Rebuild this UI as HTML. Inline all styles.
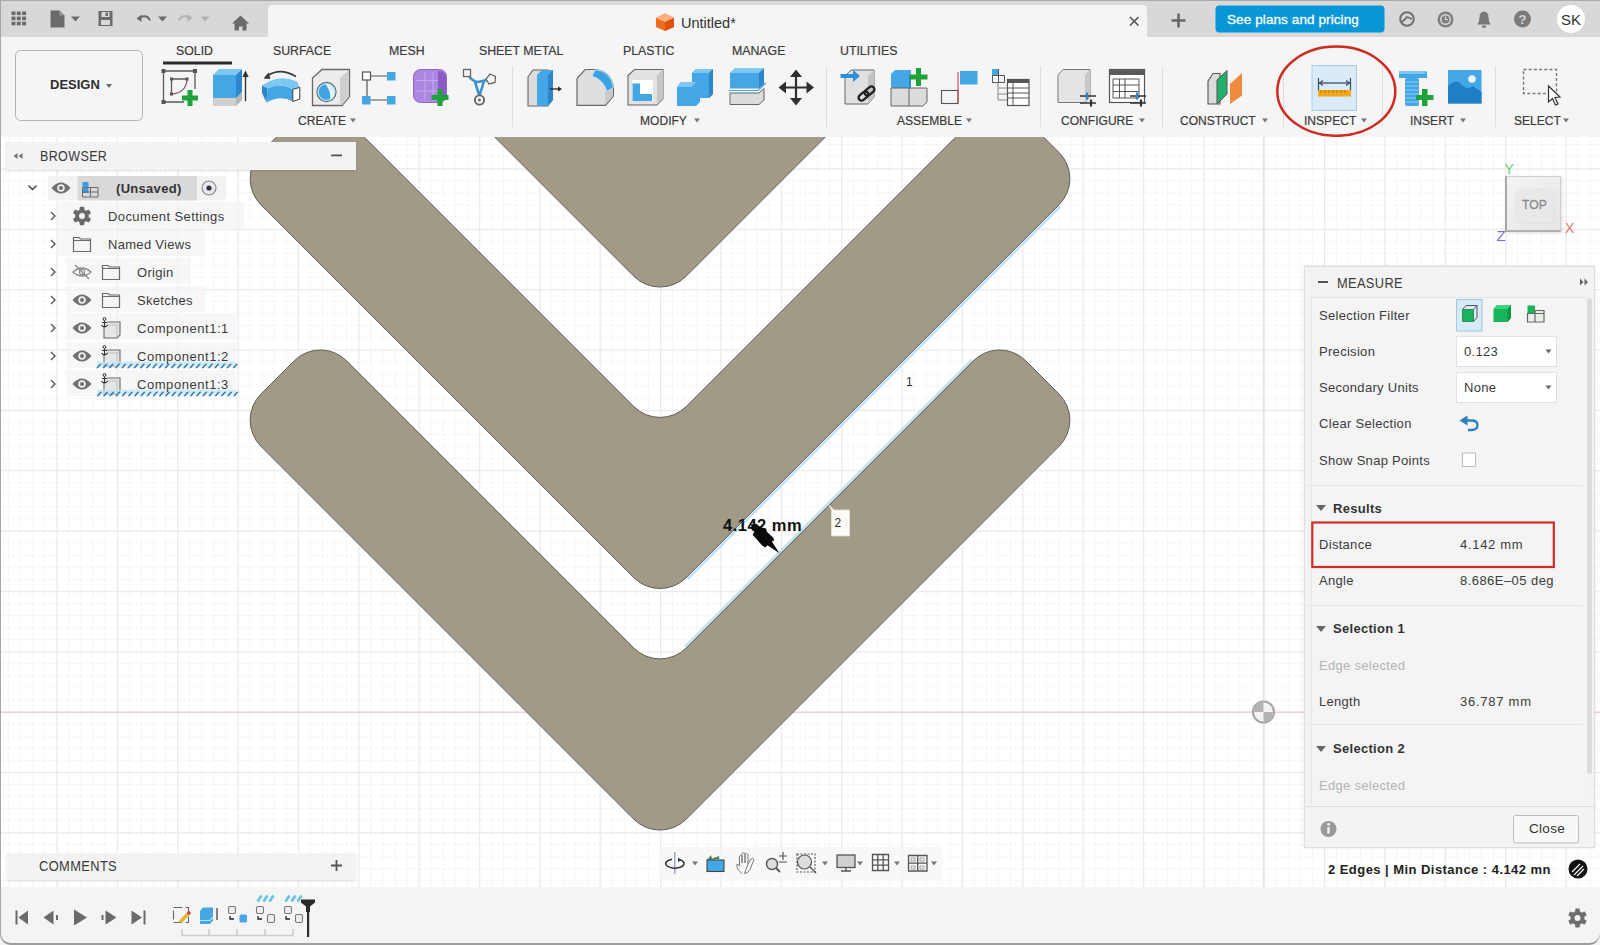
<!DOCTYPE html>
<html><head><meta charset="utf-8">
<style>
*{margin:0;padding:0;box-sizing:border-box}
html,body{width:1600px;height:945px;overflow:hidden;background:#f5f5f5;font-family:"Liberation Sans",sans-serif;color:#3c3c3c}
.a{position:absolute}
#vp{position:absolute;left:0;top:137px;width:1600px;height:750px;background:#fff;overflow:hidden}
#title{position:absolute;left:0;top:0;width:1600px;height:37px;background:#d8d8d8;border-top:1px solid #a9a9a9}
#tool{position:absolute;left:0;top:37px;width:1600px;height:100px;background:#f5f5f5}
.tab{position:absolute;top:6.8px;-webkit-text-stroke:0.2px #3a3a3a;font-size:12.5px;transform:scaleX(0.985);transform-origin:0 0;color:#3a3a3a;white-space:nowrap}
.grp{position:absolute;top:77.2px;-webkit-text-stroke:0.2px #3a3a3a;font-size:12.5px;transform:scaleX(0.965);transform-origin:0 0;color:#3a3a3a;white-space:nowrap}
.dd{display:inline-block;width:0;height:0;border-left:3px solid transparent;border-right:3px solid transparent;border-top:4px solid #777;margin-left:6px;vertical-align:2px}
.sep{position:absolute;top:66px;width:1px;height:62px;background:#dcdcdc}
.t{position:absolute;font-size:13px;color:#3c3c3c;white-space:nowrap;letter-spacing:0.3px}
svg{display:block}
</style></head><body>
<!-- VIEWPORT -->
<div id="vp">
<svg width="1600" height="750" viewBox="0 137 1600 750">
<defs>
<pattern id="gmin" width="12.072" height="12.072" patternUnits="userSpaceOnUse" patternTransform="translate(56.4,47.6)">
<rect x="0" y="0" width="1" height="12.072" fill="#f6f6f6"/><rect x="0" y="0" width="12.072" height="1" fill="#f6f6f6"/>
</pattern>
<pattern id="gmaj" width="60.36" height="60.36" patternUnits="userSpaceOnUse" patternTransform="translate(56.4,47.6)">
<rect x="0" y="0" width="1.3" height="60.36" fill="#ebebeb"/><rect x="0" y="0" width="60.36" height="1.3" fill="#ebebeb"/>
</pattern>
</defs>
<rect x="0" y="137" width="1600" height="750" fill="url(#gmin)"/>
<rect x="0" y="137" width="1600" height="750" fill="url(#gmaj)"/>
<rect x="0" y="711.6" width="1600" height="1.4" fill="#f0d2d2"/>
<rect x="1262.8" y="137" width="1.5" height="750" fill="#dfe7e5"/>
<g fill="#a19a86" stroke="#5f5d57" stroke-width="1">
<path d="M260.98,-148.98 L294.22,-182.22 A37,37 0 0 1 346.54,-182.22 L633.84,105.08 A37,37 0 0 0 686.16,105.08 L973.46,-182.22 A37,37 0 0 1 1025.78,-182.22 L1059.02,-148.98 A37,37 0 0 1 1059.02,-96.66 L686.16,276.20 A37,37 0 0 1 633.84,276.20 L260.98,-96.66 A37,37 0 0 1 260.98,-148.98 Z"/>
<path d="M260.98,152.52 L294.22,119.28 A37,37 0 0 1 346.54,119.28 L633.84,406.58 A37,37 0 0 0 686.16,406.58 L973.46,119.28 A37,37 0 0 1 1025.78,119.28 L1059.02,152.52 A37,37 0 0 1 1059.02,204.84 L686.16,577.70 A37,37 0 0 1 633.84,577.70 L260.98,204.84 A37,37 0 0 1 260.98,152.52 Z"/>
<path d="M260.98,394.02 L294.22,360.78 A37,37 0 0 1 346.54,360.78 L633.84,648.08 A37,37 0 0 0 686.16,648.08 L973.46,360.78 A37,37 0 0 1 1025.78,360.78 L1059.02,394.02 A37,37 0 0 1 1059.02,446.34 L686.16,819.20 A37,37 0 0 1 633.84,819.20 L260.98,446.34 A37,37 0 0 1 260.98,394.02 Z"/>
</g>
<!-- edge highlights -->
<path d="M687.6,579.1 L1060.2,206.5" stroke="#b3dbec" stroke-width="1.8" fill="none"/>
<path d="M686.16,577.70 L1059.02,204.84" stroke="#6a7378" stroke-width="1" fill="none"/>
<path d="M684.8,646.7 L972.1,359.4" stroke="#b3dbec" stroke-width="1.8" fill="none"/>
<path d="M686.16,648.08 L973.46,360.78" stroke="#6a7378" stroke-width="1" fill="none"/>
<!-- origin marker -->
<circle cx="1263.5" cy="712" r="10.5" fill="#f4f4f4" stroke="#a9a9a9" stroke-width="2.2"/>
<path d="M1263.5,702.5 A9.5,9.5 0 0 0 1254,712 H1263.5 Z M1263.5,721.5 A9.5,9.5 0 0 0 1273,712 H1263.5 Z" fill="#b3b3b3"/>
<!-- labels -->
<text x="906" y="385.5" font-family="Liberation Sans" font-size="12" fill="#333">1</text>
<path d="M829,505 L834,510 H849.5 V536 H831.5 V510 Z" fill="#fbfaf6" stroke="#e6e1d8" stroke-width="0.8"/>
<text x="834.5" y="526.5" font-family="Liberation Sans" font-size="12" fill="#333">2</text>
<text x="723" y="530.5" font-family="Liberation Sans" font-weight="bold" font-size="16.5" letter-spacing="0.5" fill="#111">4.142 mm</text>
<path d="M751.2,524.6 L756.1,523.8 L760.9,527.2 L766.2,528.5 L766.8,531.7 L773.3,537.8 L774.3,540.2 L771.9,541.4 L779.4,553.3 L767.5,545.3 L765.3,547.6 L762.2,545.4 L752.6,534.8 L754.4,531.7 L751.4,529.4 Z" fill="#0a0a0a"/>
</svg>
</div>

<!-- TITLE BAR -->
<div id="title">
<svg width="1600" height="37" viewBox="0 0 1600 37" style="position:absolute;left:0;top:-1px">
<!-- grid 9 -->
<g fill="#6a6a6a">
<rect x="11.5" y="11.5" width="4" height="3.6"/><rect x="16.8" y="11.5" width="4" height="3.6"/><rect x="22.1" y="11.5" width="4" height="3.6"/>
<rect x="11.5" y="16.6" width="4" height="3.6"/><rect x="16.8" y="16.6" width="4" height="3.6"/><rect x="22.1" y="16.6" width="4" height="3.6"/>
<rect x="11.5" y="21.7" width="4" height="3.6"/><rect x="16.8" y="21.7" width="4" height="3.6"/><rect x="22.1" y="21.7" width="4" height="3.6"/>
</g>
<!-- file -->
<path d="M50.5,10.5 H59.5 L64.5,15.5 V27.5 H50.5 Z" fill="#6a6a6a"/>
<path d="M59.5,10.5 V15.5 H64.5" fill="#9a9a9a"/>
<path d="M71,16.5 H80 L75.5,21.5 Z" fill="#6a6a6a"/>
<!-- save -->
<path d="M98.5,11 H112.5 V26 H98.5 Z" fill="#6a6a6a"/>
<rect x="101.5" y="12" width="8" height="5" fill="#d8d8d8"/><rect x="105.5" y="12.5" width="2.5" height="3.5" fill="#6a6a6a"/>
<rect x="101" y="20" width="9" height="5" fill="#d8d8d8"/>
<!-- undo -->
<path d="M139,18 C143,15 148,15.5 150,20.5" stroke="#6a6a6a" stroke-width="2" fill="none"/>
<path d="M136.5,18.5 L141.5,14.5 L141.5,22 Z" fill="#6a6a6a"/>
<path d="M158,16.5 H167 L162.5,21.5 Z" fill="#6a6a6a"/>
<!-- redo -->
<path d="M190,18 C186,15 181,15.5 179,20.5" stroke="#b2b2b2" stroke-width="2" fill="none"/>
<path d="M192.5,17.5 L187.5,14.5 L187.5,22 Z" fill="#b2b2b2"/>
<path d="M200.5,16.5 H209.5 L205,21.5 Z" fill="#b2b2b2"/>
<!-- home -->
<path d="M240.5,15.5 L249,23.5 H246.5 V30.5 H242.5 V26.5 H239 V30.5 H234.5 V23.5 H232 Z" fill="#6a6a6a"/>
<!-- active tab -->
<path d="M268,37 V10 Q268,5 273,5 H1142 Q1147,5 1147,10 V37 Z" fill="#f5f5f5"/>
<!-- cube icon -->
<path d="M665,13.5 L674,18 V27 L665,31 L656,27 V18 Z" fill="#f06a1e"/>
<path d="M665,13.5 L674,18 L665,22 L656,18 Z" fill="#fbb07e"/>
<path d="M665,22 L674,18 V27 L665,31 Z" fill="#e0520c"/>
<path d="M1130,17 L1138.5,25.5 M1138.5,17 L1130,25.5" stroke="#555" stroke-width="1.6"/>
<!-- plus tab -->
<path d="M1171.5,20.5 H1185.5 M1178.5,13.5 V27.5" stroke="#666" stroke-width="2.6"/>
<!-- blue button -->
<rect x="1215.5" y="5.5" width="169" height="27" rx="4" fill="#0796d8"/>
<!-- right icons -->
<g fill="none" stroke="#707070" stroke-width="2">
<circle cx="1407" cy="19" r="6.8"/>
</g>
<path d="M1402,22 L1407,17 L1412,19" stroke="#707070" stroke-width="1.8" fill="none"/>
<circle cx="1445.5" cy="19.5" r="8" fill="#808080"/>
<circle cx="1445.5" cy="19.5" r="5.5" fill="#d8d8d8"/>
<circle cx="1445.5" cy="19.5" r="4" fill="#808080"/>
<path d="M1445.5,16.5 V19.5 H1448" stroke="#d8d8d8" stroke-width="1.2" fill="none"/>
<path d="M1477.5,24.5 Q1479.5,22 1479.5,17 Q1479.5,12 1484,11.5 Q1488.5,12 1488.5,17 Q1488.5,22 1490.5,24.5 Z" fill="#777"/>
<rect x="1482" y="25.5" width="4" height="2.2" rx="1" fill="#777"/>
<circle cx="1522.5" cy="19" r="8.5" fill="#7a7a7a"/>
<text x="1522.5" y="24" font-family="Liberation Sans" font-weight="bold" font-size="13" fill="#d8d8d8" text-anchor="middle">?</text>
<circle cx="1571" cy="19" r="14" fill="#ffffff"/>
<text x="1571" y="24.5" font-family="Liberation Sans" font-size="15" fill="#333" text-anchor="middle">SK</text>
</svg>
<div class="a" style="left:681px;top:14px;font-size:14.5px;color:#333">Untitled*</div>
<div class="a" style="left:1227px;top:11px;font-size:13.5px;color:#fff;letter-spacing:0.1px;-webkit-text-stroke:0.3px #fff">See plans and pricing</div>
</div>

<!-- TOOLBAR -->
<div id="tool">
<svg width="1600" height="100" viewBox="0 37 1600 100" style="position:absolute;left:0;top:0">
<!-- DESIGN box -->
<rect x="15.5" y="50.5" width="127" height="70" rx="5" fill="#f5f5f5" stroke="#b4b4b4" stroke-width="1"/>
<path d="M106,84 H112 L109,88 Z" fill="#6a6a6a"/>
<!-- SOLID underline -->
<rect x="163" y="61.5" width="69" height="3" fill="#2c2c2c"/>
<!-- separators -->
<g fill="#dddddd">
<rect x="512" y="66" width="1" height="61"/><rect x="826" y="66" width="1" height="61"/>
<rect x="1040" y="66" width="1" height="61"/><rect x="1162" y="66" width="1" height="61"/>
<rect x="1283" y="66" width="1" height="61"/><rect x="1382" y="66" width="1" height="61"/>
<rect x="1495" y="66" width="1" height="61"/>
</g>
<!-- dropdown arrows -->
<g fill="#777">
<path d="M350,118.5 H356 L353,122.5 Z"/><path d="M694,118.5 H700 L697,122.5 Z"/>
<path d="M966,118.5 H972 L969,122.5 Z"/><path d="M1139,118.5 H1145 L1142,122.5 Z"/>
<path d="M1262,118.5 H1268 L1265,122.5 Z"/><path d="M1361,118.5 H1367 L1364,122.5 Z"/>
<path d="M1460,118.5 H1466 L1463,122.5 Z"/><path d="M1563,118.5 H1569 L1566,122.5 Z"/>
</g>
<!-- 1 sketch -->
<g stroke="#5a5a5a" stroke-width="1.3" fill="none">
<path d="M163.5,71 H195 M163.5,71 V102 M163.5,102 H184 M195,71 V89"/>
<path d="M171.5,79 H187 M171.5,79 V94"/>
</g>
<path d="M187,79.5 Q186,93 171.5,94" stroke="#8a5a78" stroke-width="1.3" fill="none"/>
<g fill="#555"><rect x="161.5" y="69" width="4" height="4"/><rect x="193" y="69" width="4" height="4"/><rect x="161.5" y="100" width="4" height="4"/>
<rect x="170" y="77.5" width="3" height="3"/><rect x="185.5" y="77.5" width="3" height="3"/><rect x="170" y="92.5" width="3" height="3"/></g>
<path d="M187.5,90 H192.5 V95.5 H198 V100.5 H192.5 V106 H187.5 V100.5 H182 V95.5 H187.5 Z" fill="#1ea23a"/>
<!-- 2 extrude -->
<path d="M213,98 H236 V106 H213 Z" fill="#cfcfcf"/><path d="M236,98 L242,92 V100 L236,106 Z" fill="#b5b5b5"/>
<path d="M213,75 H236 V98 H213 Z" fill="#44a6e4"/>
<path d="M213,75 L219,69 H242 L236,75 Z" fill="#7cc8f3"/>
<path d="M236,75 L242,69 V92 L236,98 Z" fill="#2b87c9"/>
<path d="M245.5,101 V75" stroke="#333" stroke-width="1.4"/><path d="M242.3,77 L245.5,70.5 L248.7,77 Z" fill="#333"/>
<!-- 3 revolve -->
<path d="M296,76.5 Q280,67 267,76" stroke="#3a3a3a" stroke-width="1.5" fill="none"/><path d="M263.5,78.5 L268.5,72.5 L270.5,79 Z" fill="#3a3a3a"/>
<path d="M262,85.5 Q280,73 297.5,82 L299.8,87.4 L292.8,89.3 Q281,82 267.5,88.4 Z" fill="#7cc8f3"/>
<path d="M262,85.5 L267.5,88.4 L266.5,102.4 L262,93 Z" fill="#2b87c9"/>
<path d="M267.5,88.4 Q281,82 292.8,89.3 V101.5 Q281,94.5 266.5,102.4 Z" fill="#44a6e4"/>
<path d="M292.8,89.3 L299.8,87.4 V99 L292.8,101.5 Z" fill="#fff" stroke="#3a3a3a" stroke-width="1"/>
<!-- 4 hole -->
<path d="M312.5,78 L322,69.5 H349.5 V96.5 L342,105.5 H312.5 Z" fill="#ececec" stroke="#6a6a6a" stroke-width="1.3"/>
<path d="M340,78 L349,70 V96.5 L342,105 H340 Z" fill="#cfcfcf"/>
<circle cx="326.5" cy="92" r="9.6" fill="#3fa3e2" stroke="#6a6a6a" stroke-width="1.1"/>
<circle cx="326.5" cy="92" r="8.4" fill="none" stroke="#bfe6fa" stroke-width="1.1"/>
<path d="M325,83.6 Q333,84 334.5,91 Q335,98 330,100 Q332,93 325,83.6 Z" fill="#e4f4fc"/>
<!-- 5 pattern -->
<path d="M367,76 H391 M367,76 V100 M367,100 H391" stroke="#555" stroke-width="1.2"/>
<rect x="362.5" y="72" width="8" height="8" fill="#fff" stroke="#555" stroke-width="1.2"/>
<rect x="387" y="72" width="8.5" height="8.5" fill="#44a6e4"/><rect x="362" y="96" width="8.5" height="8.5" fill="#44a6e4"/><rect x="387" y="96" width="8.5" height="8.5" fill="#44a6e4"/>
<!-- 6 form -->
<rect x="413.5" y="69.5" width="33" height="33" rx="7" fill="#ad86e2" stroke="#9068c8" stroke-width="1"/>
<path d="M438,71 Q446,71 446,78 V95 Q446,102 438,102 Z" fill="#8b5cc6"/>
<path d="M416,80.5 H438 M416,91 H438 M425,72 V101 M433,72 V101" stroke="#c6a9ee" stroke-width="1"/>
<path d="M437.5,89 H442.5 V95 H448.5 V100 H442.5 V106 H437.5 V100 H431.5 V95 H437.5 Z" fill="#1ea23a"/>
<!-- 7 derive -->
<path d="M468,75 Q473,82 478,82 L489,79.5 M475,82 L479.5,96 M484,81 L479.5,96" stroke="#3d8fd0" stroke-width="2.6" fill="none" stroke-linejoin="round"/>
<rect x="463.5" y="69.5" width="7" height="7" fill="#f5f5f5" stroke="#666" stroke-width="1.3"/>
<path d="M490,74 L495.5,76.5 L495,82.5 L489,84 L486,79 Z" fill="#f5f5f5" stroke="#666" stroke-width="1.3"/>
<circle cx="479.5" cy="100" r="4.6" fill="#f5f5f5" stroke="#666" stroke-width="1.9"/><circle cx="479.5" cy="100" r="1.4" fill="#666"/>
<!-- 8 press pull -->
<path d="M528,77 L533,70 H548 V106 H528 Z" fill="#dcdcdc" stroke="#666" stroke-width="1.1"/>
<path d="M537,75 L542,70 H553 V100 L548,106 H537 Z" fill="#44a6e4"/>
<path d="M548,75 L553,70 V100 L548,106 Z" fill="#2b87c9"/>
<path d="M550,89 H560" stroke="#222" stroke-width="1.3"/><path d="M558,86.5 L562,89 L558,91.5 Z" fill="#222"/>
<!-- 9 fillet -->
<path d="M577,105.4 V78.6 L585.1,69.5 H595.4 Q611,72 613.4,87.4 V96.1 L605.6,105.4 Z" fill="#dedede" stroke="#6a6a6a" stroke-width="1.2"/>
<path d="M605,91 L613,88 V96 L605.6,104.5 Z" fill="#c9c9c9"/>
<path d="M595.4,69.6 Q611,72 613.4,87.4 L607,91.3 Q603,79 592,76.2 Z" fill="#3aa2e2" stroke="#bfe6fa" stroke-width="0.8"/>
<!-- 10 shell -->
<path d="M628,75.5 L634.5,69.5 H663 V98.5 L657,105 H628 Z" fill="#e2e2e2" stroke="#666" stroke-width="1.1"/>
<path d="M657,75.5 L663,69.5 V98.5 L657,105 Z" fill="#c6c6c6"/>
<rect x="632" y="80" width="21" height="21" fill="#fff"/>
<path d="M632.5,83.5 H640 V94 H652 V101 H632.5 Z" fill="#44a6e4"/>
<!-- 11 combine -->
<path d="M677,87 L681,82 H692 V73 L696,69 H713 V94 L709,98 H700 V102 L696,106 H677 Z" fill="#44a6e4"/>
<path d="M692,73 L696,69 H713 L709,73 Z M677,87 L681,82 H696 L692,87 Z" fill="#7cc8f3"/>
<path d="M709,73 L713,69 V94 L709,98 Z" fill="#2b87c9"/>
<!-- 12 split -->
<path d="M730,73 L735,68.5 H764 V84 L759,88.5 H730 Z" fill="#44a6e4"/>
<path d="M730,73 L735,68.5 H764 L759,73 Z" fill="#7cc8f3"/><path d="M759,73 L764,68.5 V84 L759,88.5 Z" fill="#2b87c9"/>
<path d="M729,90.5 H758 L766,83" stroke="#44a6e4" stroke-width="1.2" fill="none"/>
<path d="M730,93 H759 L764,88.5 V100 L759,104.5 H730 Z" fill="#dcdcdc" stroke="#666" stroke-width="1"/>
<!-- 13 move -->
<g fill="#2e2e2e"><path d="M796,69.5 L802,77 H790 Z"/><path d="M796,105.5 L802,98 H790 Z"/><path d="M778.5,87.5 L786,81.5 V93.5 Z"/><path d="M814,87.5 L806.5,81.5 V93.5 Z"/></g>
<path d="M796,75 V100 M784,87.5 H809" stroke="#2e2e2e" stroke-width="2.2"/>
<!-- 14 insert link -->
<path d="M845,76 L851,70 H874 V97 L868,104 H845 Z" fill="#e0e0e0" stroke="#666" stroke-width="1"/>
<path d="M868,76 L874,70 V97 L868,104 Z" fill="#c4c4c4"/>
<path d="M840.5,74 H853 V70 L860,76 L853,82 V78 H840.5 Z" fill="#2b8fdb"/>
<g stroke="#222" stroke-width="2.4" fill="none"><rect x="858" y="93" width="11" height="6" rx="3" transform="rotate(-40 863.5 96)"/><rect x="864" y="88" width="11" height="6" rx="3" transform="rotate(-40 869.5 91)"/></g>
<!-- 15 new component -->
<path d="M891,74 L895,70 H911 V106 H891 Z" fill="#44a6e4"/>
<path d="M891,88 H927 V102 L923,106 H891 Z" fill="#dcdcdc" stroke="#666" stroke-width="1"/>
<path d="M909,88 V106" stroke="#666" stroke-width="1"/>
<path d="M909,76 H911 V88 H909 Z" fill="#2b87c9"/>
<path d="M916,68 H921 V74.5 H927.5 V79.5 H921 V86 H916 V79.5 H909.5 V74.5 H916 Z" fill="#1ea23a"/>
<!-- 16 joint -->
<rect x="941.5" y="90.5" width="16.5" height="13" fill="#f5f5f5" stroke="#555" stroke-width="1.1"/>
<path d="M958,103.5 V72" stroke="#c84a4a" stroke-width="1.1"/>
<rect x="960" y="71" width="17.5" height="13.5" fill="#44a6e4"/>
<!-- 17 table -->
<rect x="992" y="69" width="6.5" height="6.5" fill="#44a6e4"/>
<path d="M992.5,75.5 H1004.5 V82.5 H992.5 Z M998.5,75.5 V82.5 M998.5,69 V75.5" stroke="#555" stroke-width="1" fill="none"/>
<path d="M998,82.5 V100 M998,88 H1008 M998,94 H1008 M998,100 H1008" stroke="#888" stroke-width="1" fill="none"/>
<rect x="1007.5" y="79.5" width="21.5" height="26" fill="#fff" stroke="#555" stroke-width="1.2"/>
<rect x="1007.5" y="79.5" width="21.5" height="3.5" fill="#555"/>
<path d="M1007.5,88 H1029 M1007.5,93 H1029 M1007.5,98 H1029 M1013,83 V105.5" stroke="#555" stroke-width="1"/>
<!-- 18 configure 1 -->
<path d="M1058,75 L1063,69.5 H1090 V97 L1085,102.5 H1058 Z" fill="#e4e4e4" stroke="#777" stroke-width="1"/>
<path d="M1085,75 L1090,69.5 V97 L1085,102.5 Z" fill="#c8c8c8"/>
<path d="M1080,96 H1096 M1080,103 H1096" stroke="#333" stroke-width="1.6"/>
<path d="M1087,92.5 V99.5" stroke="#2b87c9" stroke-width="2.2"/><path d="M1091,99.5 V106.5" stroke="#333" stroke-width="2.2"/>
<!-- 19 configure 2 -->
<rect x="1109.5" y="69.5" width="35" height="33" fill="#fff" stroke="#555" stroke-width="1.2"/>
<rect x="1109.5" y="69.5" width="35" height="5.5" fill="#5a5a5a"/>
<path d="M1113,79 H1139 V98 H1113 Z M1113,85 H1139 M1113,91.5 H1139 M1119.5,79 V98 M1125,79 V98" stroke="#555" stroke-width="1" fill="none"/>
<path d="M1130,96 H1146 M1130,103 H1146" stroke="#333" stroke-width="1.6"/>
<path d="M1137,92.5 V99.5" stroke="#2b87c9" stroke-width="2.2"/><path d="M1141,99.5 V106.5" stroke="#333" stroke-width="2.2"/>
<!-- 20 construct -->
<path d="M1208,81 L1213,73.5 H1220 V104 H1208 Z" fill="#dcdcdc" stroke="#555" stroke-width="1.1"/>
<path d="M1217,80 L1227,70.5 V94 L1217,104 Z" fill="#22b06a" stroke="#555" stroke-width="1"/>
<path d="M1230,84 L1242,73 V95.5 L1230,104 Z" fill="#f08a3c"/>
<!-- 21 inspect -->
<rect x="1312" y="65.5" width="44.5" height="45" fill="#d9eaf8" stroke="#a9cde9" stroke-width="1"/>
<path d="M1319,83 H1350" stroke="#3a4f66" stroke-width="1.3"/>
<path d="M1318.5,78 V91 M1350.5,78 V91" stroke="#3a4f66" stroke-width="1.2"/>
<path d="M1323,80.5 L1319.5,83 L1323,85.5 M1346,80.5 L1349.5,83 L1346,85.5" stroke="#3a4f66" stroke-width="1.2" fill="none"/>
<rect x="1318" y="90" width="33" height="6.5" fill="#f3a51b"/>
<path d="M1321,90 V93 M1325,90 V93 M1329,90 V93 M1333,90 V93 M1337,90 V93 M1341,90 V93 M1345,90 V93" stroke="#b06a00" stroke-width="0.8"/>
<!-- red ellipse -->
<ellipse cx="1336.3" cy="91.2" rx="59" ry="44.6" fill="none" stroke="#cf2a20" stroke-width="2.5"/>
<!-- 22 bolt -->
<path d="M1399,71 H1425 Q1427,71 1427,73 V78 H1399 Z" fill="#44a6e4"/>
<rect x="1399" y="71" width="26" height="3" fill="#7cc8f3"/>
<rect x="1405" y="78" width="14" height="28" rx="2" fill="#44a6e4"/>
<path d="M1405,82 H1419 M1405,86 H1419 M1405,90 H1419 M1405,94 H1419 M1405,98 H1419 M1405,102 H1419" stroke="#8fd0f5" stroke-width="1"/>
<path d="M1422,89 H1427.5 V95 H1433.5 V100 H1427.5 V106 H1422 V100 H1416 V95 H1422 Z" fill="#1ea23a"/>
<!-- 23 image -->
<rect x="1448" y="70" width="33.5" height="33.5" fill="#44a6e4"/>
<path d="M1448,86 Q1456,78 1461,84 Q1467,91 1473,86 L1481.5,92 V103.5 H1448 Z" fill="#1f7fc4"/>
<circle cx="1472" cy="79" r="3.8" fill="#e8f6ff"/>
<!-- 24 select -->
<rect x="1523.5" y="69.5" width="33" height="24" fill="none" stroke="#777" stroke-width="1.4" stroke-dasharray="3,2.2"/>
<path d="M1548.5,86 V102 L1552.5,98.5 L1555.5,105 L1558,104 L1555,97.5 L1560,97 Z" fill="#fff" stroke="#333" stroke-width="1.2"/>
</svg>
<div class="a" style="left:50px;top:40px;font-size:13px;font-weight:bold;color:#2e2e2e">DESIGN</div>
<div class="tab" style="left:176px">SOLID</div>
<div class="tab" style="left:273px">SURFACE</div>
<div class="tab" style="left:389px">MESH</div>
<div class="tab" style="left:479px">SHEET METAL</div>
<div class="tab" style="left:623px">PLASTIC</div>
<div class="tab" style="left:732px">MANAGE</div>
<div class="tab" style="left:840px">UTILITIES</div>
<div class="grp" style="left:298px">CREATE</div>
<div class="grp" style="left:640px">MODIFY</div>
<div class="grp" style="left:897px">ASSEMBLE</div>
<div class="grp" style="left:1061px">CONFIGURE</div>
<div class="grp" style="left:1180px">CONSTRUCT</div>
<div class="grp" style="left:1304px">INSPECT</div>
<div class="grp" style="left:1410px">INSERT</div>
<div class="grp" style="left:1514px">SELECT</div>
</div>

<div id="browser">
<div class="a" style="left:6px;top:142px;width:350px;height:28px;background:#f3f3f3;box-shadow:0 1px 2px rgba(0,0,0,0.12)"></div>
<svg class="a" style="left:0;top:130px" width="360" height="280" viewBox="0 130 360 280">
<path d="M13.5,156 L17.5,153 V159 Z M18.5,156 L22.5,153 V159 Z" fill="#777"/>
<rect x="331" y="154.5" width="11" height="1.8" fill="#555"/>
<!-- row backgrounds -->
<rect x="48" y="176" width="178" height="24.5" fill="#f1f1f1" fill-opacity="0.9"/>
<rect x="77.5" y="176" width="119.5" height="24.5" fill="#d9d9d9"/>
<rect x="56" y="202" width="188" height="26" fill="#f4f4f4" fill-opacity="0.7"/>
<rect x="56" y="230" width="149" height="26" fill="#f4f4f4" fill-opacity="0.7"/>
<rect x="66" y="258" width="125" height="26" fill="#f4f4f4" fill-opacity="0.7"/>
<rect x="66" y="286" width="140" height="26" fill="#f4f4f4" fill-opacity="0.7"/>
<rect x="66" y="314" width="170" height="26" fill="#f4f4f4" fill-opacity="0.7"/>
<rect x="66" y="342" width="170" height="26" fill="#f4f4f4" fill-opacity="0.7"/>
<rect x="66" y="370" width="170" height="26" fill="#f4f4f4" fill-opacity="0.7"/>
<!-- row 1 -->
<path d="M28.5,185.5 L32.5,189.5 L36.5,185.5" stroke="#444" stroke-width="1.5" fill="none"/>
<path d="M51.5,188.0 Q61.0,177.0 70.5,188.0 Q61.0,199.0 51.5,188.0 Z" fill="#707070"/><circle cx="61.0" cy="188.0" r="3.8" fill="#eeeeee"/><circle cx="61.0" cy="188.0" r="2" fill="#707070"/>
<rect x="82.5" y="182" width="6" height="11" fill="#3d9de0"/>
<path d="M82.5,187.5 H98 V197 H82.5 Z M90.5,187.5 V197 M82.5,192 H98" stroke="#6a6a6a" stroke-width="1" fill="none"/>
<circle cx="209" cy="188" r="7" fill="#e8e8f0" stroke="#8a8a8a" stroke-width="1.2"/>
<circle cx="209" cy="188" r="2.6" fill="#333"/>
<!-- row 2 -->
<path d="M51,212 L55,216 L51,220" stroke="#555" stroke-width="1.4" fill="none"/>
<g transform="translate(82,216)"><circle r="6.8" fill="#6a6a6a"/><g fill="#6a6a6a"><rect x="-2.3" y="-9.3" width="4.6" height="18.6" rx="1"/><rect x="-2.3" y="-9.3" width="4.6" height="18.6" rx="1" transform="rotate(60)"/><rect x="-2.3" y="-9.3" width="4.6" height="18.6" rx="1" transform="rotate(120)"/></g><circle r="3" fill="#f2f2f2"/></g>
<!-- row 3 -->
<path d="M51,240 L55,244 L51,248" stroke="#555" stroke-width="1.4" fill="none"/>
<path d="M73.5,237.5 H79 L80.5,239 H90.5 V251.5 H73.5 Z M73.5,240.5 H90.5" stroke="#6a6a6a" stroke-width="1.2" fill="#f5f5f5"/>
<!-- row 4 -->
<path d="M51,268 L55,272 L51,276" stroke="#555" stroke-width="1.4" fill="none"/>
<path d="M73,272 Q82,264 91,272 Q82,280 73,272 Z" stroke="#8a8a8a" stroke-width="1.2" fill="none"/><circle cx="82" cy="272" r="2.6" stroke="#8a8a8a" stroke-width="1.1" fill="none"/><path d="M75,265 L89,279" stroke="#8a8a8a" stroke-width="1.3"/>
<path d="M102.5,265.5 H108 L109.5,267 H119.5 V279.5 H102.5 Z M102.5,268.5 H119.5" stroke="#6a6a6a" stroke-width="1.2" fill="#f5f5f5"/>
<!-- row 5 -->
<path d="M51,296 L55,300 L51,304" stroke="#555" stroke-width="1.4" fill="none"/>
<path d="M72.5,300.0 Q82.0,289.0 91.5,300.0 Q82.0,311.0 72.5,300.0 Z" fill="#707070"/><circle cx="82.0" cy="300.0" r="3.8" fill="#eeeeee"/><circle cx="82.0" cy="300.0" r="2" fill="#707070"/>
<path d="M102.5,293.5 H108 L109.5,295 H119.5 V307.5 H102.5 Z M102.5,296.5 H119.5" stroke="#6a6a6a" stroke-width="1.2" fill="#f5f5f5"/>
<!-- rows 6-8 -->
<path d="M51,324 L55,328 L51,332" stroke="#555" stroke-width="1.4" fill="none"/><path d="M72.5,328.0 Q82.0,317.0 91.5,328.0 Q82.0,339.0 72.5,328.0 Z" fill="#707070"/><circle cx="82.0" cy="328.0" r="3.8" fill="#eeeeee"/><circle cx="82.0" cy="328.0" r="2" fill="#707070"/><path d="M107.0,322.0 H120.0 V335.0 L117.0,338.0 H104.0 V327.0" fill="#e6e6e6" stroke="#6a6a6a" stroke-width="1.1"/><path d="M117.0,325.0 V337.5 M107.0,325.0 H119.5" stroke="#b5b5b5" stroke-width="0.8" fill="none"/><circle cx="104.5" cy="319.0" r="1.4" fill="none" stroke="#333" stroke-width="1"/><path d="M104.5,320.5 V327.5 M102.0,322.5 H107.0 M101.5,325.0 Q104.5,329.0 107.5,325.0" stroke="#333" stroke-width="1.2" fill="none"/>
<path d="M51,352 L55,356 L51,360" stroke="#555" stroke-width="1.4" fill="none"/><path d="M72.5,356.0 Q82.0,345.0 91.5,356.0 Q82.0,367.0 72.5,356.0 Z" fill="#707070"/><circle cx="82.0" cy="356.0" r="3.8" fill="#eeeeee"/><circle cx="82.0" cy="356.0" r="2" fill="#707070"/><path d="M107.0,350.0 H120.0 V363.0 L117.0,366.0 H104.0 V355.0" fill="#e6e6e6" stroke="#6a6a6a" stroke-width="1.1"/><path d="M117.0,353.0 V365.5 M107.0,353.0 H119.5" stroke="#b5b5b5" stroke-width="0.8" fill="none"/><circle cx="104.5" cy="347.0" r="1.4" fill="none" stroke="#333" stroke-width="1"/><path d="M104.5,348.5 V355.5 M102.0,350.5 H107.0 M101.5,353.0 Q104.5,357.0 107.5,353.0" stroke="#333" stroke-width="1.2" fill="none"/>
<path d="M51,380 L55,384 L51,388" stroke="#555" stroke-width="1.4" fill="none"/><path d="M72.5,384.0 Q82.0,373.0 91.5,384.0 Q82.0,395.0 72.5,384.0 Z" fill="#707070"/><circle cx="82.0" cy="384.0" r="3.8" fill="#eeeeee"/><circle cx="82.0" cy="384.0" r="2" fill="#707070"/><path d="M107.0,378.0 H120.0 V391.0 L117.0,394.0 H104.0 V383.0" fill="#e6e6e6" stroke="#6a6a6a" stroke-width="1.1"/><path d="M117.0,381.0 V393.5 M107.0,381.0 H119.5" stroke="#b5b5b5" stroke-width="0.8" fill="none"/><circle cx="104.5" cy="375.0" r="1.4" fill="none" stroke="#333" stroke-width="1"/><path d="M104.5,376.5 V383.5 M102.0,378.5 H107.0 M101.5,381.0 Q104.5,385.0 107.5,381.0" stroke="#333" stroke-width="1.2" fill="none"/>
<rect x="97" y="361.5" width="139" height="5" fill="#c6e6f3" fill-opacity="0.7"/><path d="M97,366 H236" stroke="#2a7fb8" stroke-width="4.5" stroke-dasharray="2,4.2" transform="skewX(-40) translate(308,0)"/>
<rect x="97" y="389.5" width="139" height="5" fill="#c6e6f3" fill-opacity="0.7"/><path d="M97,394 H236" stroke="#2a7fb8" stroke-width="4.5" stroke-dasharray="2,4.2" transform="skewX(-40) translate(332,0)"/>
</svg>
<div class="t" style="left:39.5px;top:148px;font-size:14px;color:#3a3a3a;letter-spacing:0.4px;transform:scaleX(0.895);transform-origin:0 0">BROWSER</div>
<div class="t" style="left:116px;top:180.5px;font-weight:bold;color:#333">(Unsaved)</div>
<div class="t" style="left:108px;top:208.5px;letter-spacing:0.4px">Document Settings</div>
<div class="t" style="left:108px;top:236.5px">Named Views</div>
<div class="t" style="left:137px;top:264.5px">Origin</div>
<div class="t" style="left:137px;top:292.5px">Sketches</div>
<div class="t" style="left:137px;top:320.5px;letter-spacing:0.55px">Component1:1</div>
<div class="t" style="left:137px;top:348.5px;letter-spacing:0.55px">Component1:2</div>
<div class="t" style="left:137px;top:376.5px;letter-spacing:0.55px">Component1:3</div>
</div>
<div id="measure">
<div class="a" style="left:1304px;top:266px;width:291px;height:582px;background:#f3f3f3;border:1px solid #dedede;box-shadow:0 0 3px rgba(0,0,0,0.10)"></div>
<div class="a" style="left:1311px;top:297px;width:276px;height:509px;background:#f4f4f4;border-top:1px solid #e4e4e4;border-left:1px solid #e8e8e8"></div>
<div class="a" style="left:1587px;top:298px;width:5px;height:476px;background:#dcdcdc;border-radius:2px"></div>
<div class="a" style="left:1305px;top:806px;width:289px;height:1px;background:#dddddd"></div>
<svg class="a" style="left:1300px;top:260px" width="300" height="625" viewBox="1300 260 300 625">
<rect x="1318" y="281" width="10" height="2" fill="#555"/>
<path d="M1580,278.5 L1583.5,282 L1580,285.5 Z M1584.5,278.5 L1588,282 L1584.5,285.5 Z" fill="#666"/>
<!-- filter icons -->
<rect x="1456.5" y="299.5" width="25.5" height="31.5" fill="#d7eaf7" stroke="#9ccbe8" stroke-width="1"/>
<path d="M1462.5,309.5 H1473.5 V321.5 H1462.5 Z" fill="#17b45a" stroke="#2d7a4a" stroke-width="0.8"/>
<path d="M1462.5,309.5 L1466,305.5 H1477 V317.5 L1473.5,321.5 M1473.5,309.5 L1477,305.5" stroke="#555" stroke-width="1" fill="none"/>
<path d="M1493.5,309 L1497,305 H1511 V318 L1507.5,322 H1493.5 Z" fill="#17b45a"/>
<path d="M1507.5,309 L1511,305 V318 L1507.5,322 Z" fill="#0f9448"/>
<path d="M1493.5,309 L1497,305 H1511 L1507.5,309 Z" fill="#3cd47f"/>
<rect x="1527.5" y="305.5" width="7.5" height="8" fill="#17b45a"/>
<path d="M1527.5,313.5 H1544 V322 H1527.5 Z M1535,313.5 V322 M1535,313.5 V310.5 H1544 V313.5" stroke="#666" stroke-width="1.2" fill="#e8efe8"/>
<!-- dropdowns -->
<rect x="1456.5" y="336.5" width="100" height="30" fill="#fff" stroke="#e2e2e2" stroke-width="1"/>
<path d="M1545.5,349.5 H1551.5 L1548.5,353.5 Z" fill="#666"/>
<rect x="1456.5" y="372.5" width="100" height="30" fill="#fff" stroke="#e2e2e2" stroke-width="1"/>
<path d="M1545.5,385.5 H1551.5 L1548.5,389.5 Z" fill="#666"/>
<!-- clear selection -->
<path d="M1465,420.5 H1471.5 Q1477.5,420.5 1477.5,425 Q1477.5,430 1471.5,430 H1468" stroke="#2a80bd" stroke-width="2.3" fill="none"/>
<path d="M1459.5,420.5 L1467.5,415.5 V425.5 Z" fill="#2a80bd"/>
<!-- checkbox -->
<rect x="1462.5" y="453" width="13" height="13.5" rx="0.5" fill="#fff" stroke="#bdbdbd" stroke-width="1.1"/>
<rect x="1306" y="485" width="276" height="1" fill="#e6e6e6"/>
<path d="M1316,505 H1326 L1321,511 Z" fill="#666"/>
<rect x="1312.3" y="522.5" width="241.5" height="44.5" fill="none" stroke="#cf2e23" stroke-width="2.2"/>
<rect x="1306" y="605" width="276" height="1" fill="#e6e6e6"/>
<path d="M1316,626 H1326 L1321,632 Z" fill="#666"/>
<rect x="1306" y="724" width="276" height="1" fill="#e6e6e6"/>
<path d="M1316,746 H1326 L1321,752 Z" fill="#666"/>
<!-- footer -->
<circle cx="1328.5" cy="829" r="8" fill="#9a9a9a"/>
<rect x="1327.3" y="827" width="2.4" height="6.5" fill="#f3f3f3"/><circle cx="1328.5" cy="824.3" r="1.4" fill="#f3f3f3"/>
<rect x="1513.5" y="815.5" width="65" height="27.5" rx="2" fill="#f8f8f8" stroke="#bdbdbd" stroke-width="1"/>
<!-- status icon -->
<circle cx="1578" cy="869" r="9.5" fill="#111"/>
<path d="M1572,872 L1580,864 M1574,875 L1583,866 M1577,876 L1584,869" stroke="#fff" stroke-width="1.1"/>
</svg>
<div class="t" style="left:1337px;top:274.5px;font-size:14px;letter-spacing:0.4px;transform:scaleX(0.915);transform-origin:0 0;color:#3a3a3a">MEASURE</div>
<div class="t" style="left:1319px;top:307.5px">Selection Filter</div>
<div class="t" style="left:1319px;top:343.5px">Precision</div>
<div class="t" style="left:1464px;top:343.5px">0.123</div>
<div class="t" style="left:1319px;top:379.5px">Secondary Units</div>
<div class="t" style="left:1464px;top:379.5px">None</div>
<div class="t" style="left:1319px;top:415.5px">Clear Selection</div>
<div class="t" style="left:1319px;top:452.5px">Show Snap Points</div>
<div class="t" style="left:1333px;top:500.5px;font-weight:bold;color:#333">Results</div>
<div class="t" style="left:1319px;top:536.5px">Distance</div>
<div class="t" style="left:1460px;top:536.5px;letter-spacing:0.7px">4.142 mm</div>
<div class="t" style="left:1319px;top:572.5px">Angle</div>
<div class="t" style="left:1460px;top:572.5px;letter-spacing:0.45px">8.686E&#8211;05 deg</div>
<div class="t" style="left:1333px;top:620.5px;font-weight:bold;color:#333">Selection 1</div>
<div class="t" style="left:1319px;top:657.5px;color:#b4b4b4">Edge selected</div>
<div class="t" style="left:1319px;top:693.5px">Length</div>
<div class="t" style="left:1460px;top:693.5px;letter-spacing:0.75px">36.787 mm</div>
<div class="t" style="left:1333px;top:741px;font-weight:bold;color:#333">Selection 2</div>
<div class="t" style="left:1319px;top:777.5px;color:#b4b4b4">Edge selected</div>
<div class="t" style="left:1529px;top:821px;font-size:13.5px;color:#333">Close</div>
<div class="t" style="left:1328px;top:861.5px;font-weight:bold;color:#222;font-size:13px;letter-spacing:0.45px">2 Edges | Min Distance : 4.142 mn</div>
</div>
<div id="bottom">
<div class="a" style="left:0;top:887px;width:1600px;height:58px;background:#f4f4f4"></div>
<!-- comments -->
<div class="a" style="left:7px;top:852.5px;width:349px;height:27px;background:#f3f3f3;box-shadow:0 1px 2px rgba(0,0,0,0.12)"></div>
<div class="t" style="left:39px;top:857.5px;font-size:14px;letter-spacing:0.4px;transform:scaleX(0.92);transform-origin:0 0;color:#3a3a3a">COMMENTS</div>
<!-- nav bar bg -->
<div class="a" style="left:659px;top:847px;width:284px;height:33px;background:#f6f6f6;border-radius:3px;opacity:0.75"></div>
<!-- viewcube -->
<div class="a" style="left:1505px;top:176px;width:56px;height:56px;background:linear-gradient(135deg,#f4f4f4,#e6e6e6);border:1px solid #cfcfcf;border-left:2px solid #a8a8a8;border-bottom:2px solid #b0b0b0;box-shadow:1px 1px 3px rgba(0,0,0,0.15)"></div>
<div class="a" style="left:1517px;top:190px;width:36px;height:32px;background:#e9e9ea;border-radius:4px;box-shadow:0 0 4px rgba(0,0,0,0.08)"></div>
<div class="t" style="left:1521.5px;top:197px;font-size:13.5px;color:#8c8c8c;letter-spacing:0px;-webkit-text-stroke:0.35px #8c8c8c;transform:scaleX(0.9);transform-origin:0 0">TOP</div>
<svg class="a" style="left:0;top:840px" width="1600" height="105" viewBox="0 840 1600 105">
<path d="M331,865.5 H342 M336.5,860 V871" stroke="#555" stroke-width="1.8"/>
<!-- nav icons -->
<path d="M674.8,852 V874" stroke="#7a84b8" stroke-width="1.1"/>
<path d="M679.5,859.6 A9.2,4.6 0 1 1 672,859.2" fill="none" stroke="#333" stroke-width="1.5"/>
<path d="M678,857.5 L681.5,860 L678,862 Z" fill="#333"/>
<path d="M692,861.5 H698 L695,865.5 Z" fill="#777"/>
<path d="M707,860 L711,855 L712,858.5 L719,856 L719.5,859 Z" fill="#4a8a5a"/>
<rect x="707" y="860" width="17" height="11.5" fill="#44a6e4" stroke="#444" stroke-width="1.1"/>
<path d="M742,873.5 C738.5,871 736,867 737,864 L739.5,866 V856 Q740.5,854 742,856 V863 M742,863 V853.5 Q743.5,851.5 745,853.5 V863 M745,863 V854.5 Q746.5,852.5 748,854.5 V864 M748,864 L751,859 Q753,857.5 754,859.5 L750,869.5 Q748,873.5 744.5,873.5 Z" fill="none" stroke="#7a7a7a" stroke-width="1"/>
<circle cx="772" cy="864" r="5.5" fill="#dedede" stroke="#555" stroke-width="1.4"/><path d="M776,868 L780,872" stroke="#555" stroke-width="1.8"/>
<path d="M779,856 H787 M783,852 V860 M779,862 H787" stroke="#555" stroke-width="1.2"/>
<rect x="797" y="854" width="18" height="18" fill="none" stroke="#555" stroke-width="1.1" stroke-dasharray="2,1.5"/>
<circle cx="804.5" cy="862" r="7" fill="#dedede" stroke="#555" stroke-width="1.2"/><path d="M810,867 L816,873" stroke="#555" stroke-width="1.4"/>
<path d="M822,861.5 H828 L825,865.5 Z" fill="#777"/>
<rect x="837" y="855" width="18" height="12.5" fill="#d0d0d0" stroke="#555" stroke-width="1.3"/><path d="M841,871 H851 M846,867.5 V871" stroke="#555" stroke-width="1.3"/>
<path d="M857,861.5 H863 L860,865.5 Z" fill="#777"/>
<path d="M872.5,854.5 H888.5 V870.5 H872.5 Z M872.5,859.8 H888.5 M872.5,865.2 H888.5 M877.8,854.5 V870.5 M883.2,854.5 V870.5" stroke="#555" stroke-width="1.3" fill="none"/>
<path d="M894,861.5 H900 L897,865.5 Z" fill="#777"/>
<path d="M908.5,855.5 H927 V871 H908.5 Z M908.5,863.2 H927 M917.7,855.5 V871" stroke="#555" stroke-width="1.3" fill="none"/>
<path d="M911,858 H915 V861 H911 Z M920,858 H924 V861 H920 Z M911,866 H915 V869 H911 Z M920,866 H924 V869 H920 Z" stroke="#888" stroke-width="0.8" fill="none"/>
<path d="M931,861.5 H937 L934,865.5 Z" fill="#777"/>
<!-- playback -->
<g fill="#6a6a6a">
<rect x="15.5" y="910.5" width="2" height="14"/><path d="M28,910.5 V924.5 L18.5,917.5 Z"/>
<path d="M53.5,910.5 V924.5 L43.5,917.5 Z"/><rect x="56" y="915" width="2" height="5"/>
<path d="M74,909.5 V925.5 L87,917.5 Z"/>
<rect x="101.5" y="915" width="2" height="5"/><path d="M105.5,910.5 V924.5 L116.5,917.5 Z"/>
<path d="M131.5,910.5 V924.5 L142,917.5 Z"/><rect x="143.5" y="910.5" width="2" height="14"/>
</g>
<!-- timeline -->
<path d="M182,935.5 H294 M182,929 V936 M209,929 V936 M237,929 V936 M265,929 V936 M293,929 V936" stroke="#cfcfcf" stroke-width="1.6" fill="none"/>
<path d="M173.5,907.5 H188.5 V922.5 H173.5 Z" stroke="#666" stroke-width="1.1" fill="none" stroke-dasharray="9,3"/>
<path d="M180,922 L189,913" stroke="#e7b62b" stroke-width="3.5"/><circle cx="189" cy="913" r="1.8" fill="#d43a3a"/>
<path d="M200,911 L203,907.5 H213 V920.5 L210,924 H200 Z" fill="#44a6e4"/><path d="M200,920.5 H210 L213,917" stroke="#bfe3f5" stroke-width="1.2" fill="none"/>
<path d="M217,908 V920" stroke="#333" stroke-width="1.2"/>
<g stroke="#777" stroke-width="1.1" fill="#eeeeee">
<rect x="228.5" y="906.5" width="7" height="7" rx="1.5"/><rect x="256.5" y="906.5" width="7" height="7" rx="1.5"/><rect x="284.5" y="906.5" width="7" height="7" rx="1.5"/>
<rect x="267.5" y="914.5" width="7" height="8" rx="1.5"/><rect x="295.5" y="914.5" width="7" height="8" rx="1.5"/>
</g>
<rect x="239.5" y="914.5" width="7.5" height="8" rx="1.5" fill="#44a6e4"/>
<path d="M230,916 V919 H234 M258,916 V919 H262 M286,916 V919 H290" stroke="#222" stroke-width="1.3" fill="none"/>
<path d="M257.5,901.5 L261.5,895.5 M263.5,901.5 L267.5,895.5 M269.5,901.5 L273.5,895.5 M285.5,901.5 L289.5,895.5 M291.5,901.5 L295.5,895.5 M297.5,901.5 L301.5,895.5" stroke="#66c2e2" stroke-width="2.6"/>
<path d="M301,899.5 H315 V902.5 L310,906.5 V912 H306 V906.5 L301,902.5 Z" fill="#2b2b2b"/>
<rect x="307" y="906" width="2.2" height="31" fill="#2b2b2b"/>
<!-- gear -->
<g transform="translate(1577.5,918)"><circle r="7" fill="#6e6e6e"/><g fill="#6e6e6e"><rect x="-2.3" y="-9.5" width="4.6" height="19" rx="1"/><rect x="-2.3" y="-9.5" width="4.6" height="19" rx="1" transform="rotate(60)"/><rect x="-2.3" y="-9.5" width="4.6" height="19" rx="1" transform="rotate(120)"/></g><circle r="3" fill="#f4f4f4"/></g>
<!-- window border bottom -->
</svg>
<!-- axis labels -->
<div class="t" style="left:1504.5px;top:161px;font-size:14px;color:#5fcf6f">Y</div>
<div class="t" style="left:1565px;top:219.5px;font-size:14px;color:#e0796e">X</div>
<div class="t" style="left:1496.5px;top:226.5px;font-size:15px;color:#7b6fd8">Z</div>
</div>
<!-- window border -->
<div class="a" style="left:0;top:0;width:1600px;height:945px;border-left:1.5px solid #a6a6a6;border-bottom:2px solid #9e9e9e;border-bottom-left-radius:11px;border-bottom-right-radius:11px;pointer-events:none"></div>
</body></html>
